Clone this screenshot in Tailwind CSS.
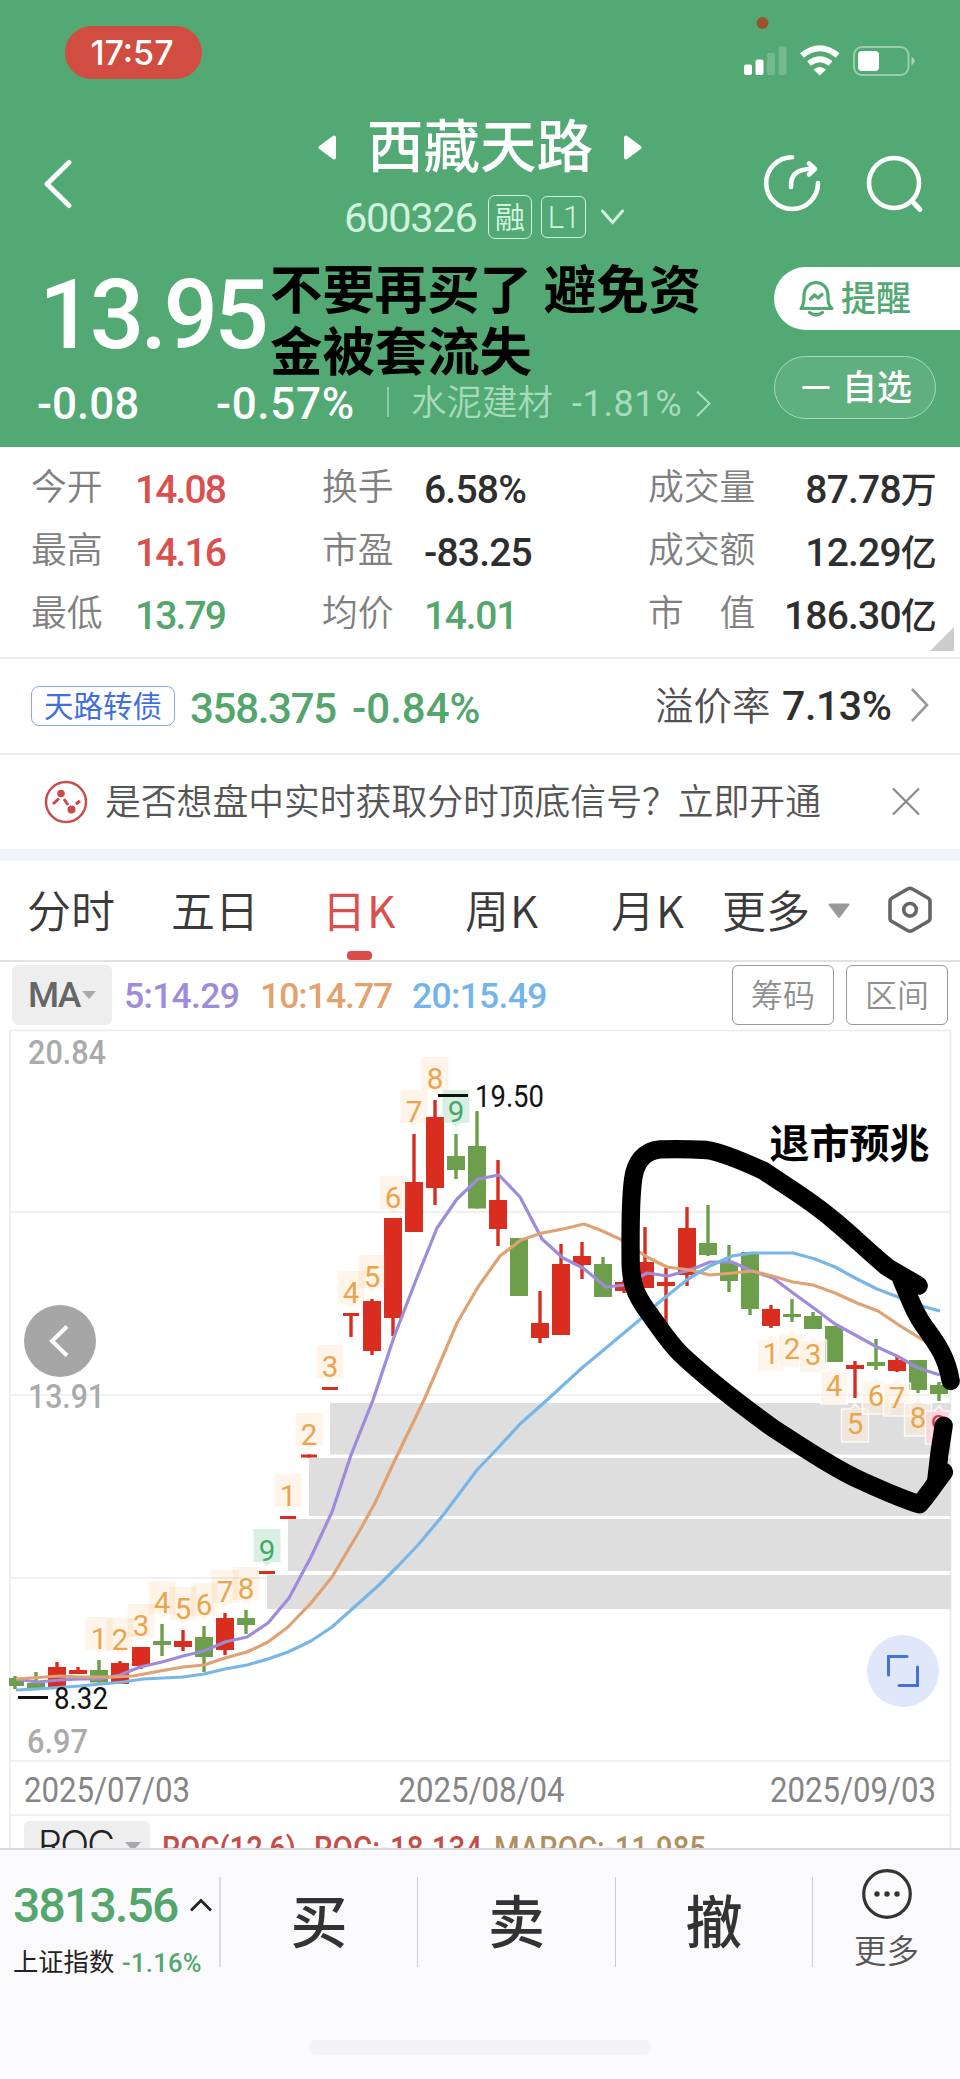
<!DOCTYPE html>
<html lang="zh-CN">
<head>
<meta charset="utf-8">
<title>西藏天路 600326</title>
<script src="https://cdn.jsdelivr.net/npm/@tailwindcss/browser@4"></script>
</head>
<body class="w-[960px] h-[2079px] overflow-hidden bg-white font-['Roboto','Noto_Sans_CJK_SC',sans-serif] leading-none whitespace-nowrap flex flex-col">

<!-- Header -->
<header class="relative h-[447px] shrink-0 bg-[#53a973] text-white">
  <div class="h-[104px] flex justify-between pl-[65px] pr-[42px] pt-[14px]">
    <div class="mt-3 w-[137px] h-[53px] rounded-full bg-[#d14d41] flex items-center justify-center text-[34px] font-medium font-['Inter'] pr-[3px]">17:57</div>
    <svg width="176" height="66" viewBox="742 14 176 66" fill="#fff">
      <circle cx="762.500" cy="23" r="6" fill="#9a532f"/>
      <rect x="744" y="64.500" width="8" height="10.500" rx="2"/>
      <rect x="755.500" y="59.500" width="8" height="15.500" rx="2"/>
      <rect x="767" y="53" width="8" height="22" rx="2" opacity=".2"/>
      <rect x="778.500" y="46.500" width="8" height="28.500" rx="2" opacity=".2"/>
      <g fill="none" stroke="#fff" stroke-width="6">
        <path d="M802 55.500Q819.800 41 837.600 55.500"/>
        <path d="M809 63.500Q819.800 55 830.600 63.500"/>
      </g>
      <path d="M813.500 69.500Q819.800 64.500 826 69.500L819.800 75.500Z"/>
      <rect x="854" y="47" width="54.500" height="28" rx="8" fill="none" stroke="#fff" stroke-opacity=".42" stroke-width="2"/>
      <rect x="858" y="51" width="21" height="20" rx="4"/>
      <path d="M911.500 56.500Q918 61 911.500 65.500Z" opacity=".5"/>
    </svg>
  </div>
  <div class="h-[146px] flex">
    <svg class="shrink-0 ml-[40px] mt-[52px]" width="36" height="56" viewBox="40 156 36 56" fill="none" stroke="#fff" stroke-width="5" stroke-linecap="round" stroke-linejoin="round"><path d="M69 162.500L47 184L69 205.500"/></svg>
    <div class="ml-[242px] w-[324px]">
      <div class="flex items-center h-[86px]">
        <svg class="mt-[1px]" width="19" height="27" viewBox="0 0 19 27" fill="#fff" stroke="#fff" stroke-width="4" stroke-linejoin="round"><path d="M16 3.500V23.500L2.500 13.500Z"/></svg>
        <h1 class="ml-[30px] text-[56.500px] font-medium pt-[3px]">西藏天路</h1>
        <svg class="ml-[30px] mt-[1px]" width="19" height="27" viewBox="0 0 19 27" fill="#fff" stroke="#fff" stroke-width="4" stroke-linejoin="round"><path d="M3 3.500V23.500L16.500 13.500Z"/></svg>
      </div>
      <div class="flex items-center h-[54px] pl-[26px] text-[#d0f3df]">
        <span class="w-[144px] text-[41.500px] tracking-[-1.200px] pt-[2px]">600326</span>
        <span class="w-[44px] h-[44px] border-[1.500px] border-current rounded-[7px] flex items-center justify-center text-[30px] font-normal pt-[1px]">融</span>
        <span class="ml-[9px] w-[45px] h-[42px] border border-current rounded-[6px] flex items-center justify-center text-[31px] font-light tracking-[-1px]">L1</span>
        <svg class="ml-[14px]" width="26" height="18" viewBox="0 0 26 18" fill="none" stroke="#d0f3df" stroke-width="3" stroke-linecap="round"><path d="M2.500 3L12.500 14.500L22.500 3"/></svg>
      </div>
    </div>
    <svg class="ml-[118px] mt-[46px]" width="170" height="70" viewBox="760 150 170 70" fill="none" stroke="#fff" stroke-width="4.600" stroke-linecap="round" stroke-linejoin="round">
      <path d="M792 157.200A25.900 25.900 0 1 0 818 183"/>
      <path d="M791 187C790.500 174 797 169 813.500 168.700M809 163.500L815 169L809 174.500"/>
      <circle cx="894" cy="183" r="25"/><path d="M912.500 201.500L920 209.500" stroke-width="5"/>
    </svg>
  </div>
  <div class="flex h-[197px]">
    <div class="w-[774px]">
      <div class="h-[128px] pl-[39px] pt-[17px] text-[96px] font-medium tracking-[-3.800px]">13.95</div>
      <div class="h-[52px] flex items-center pl-[37px]">
        <span class="w-[179px] text-[44px] font-medium">-0.08</span>
        <span class="w-[171px] text-[44px] tracking-[0.700px] font-medium">-0.57%</span>
        <span class="w-[2px] h-[30px] bg-[#8acca3] mb-[5px]"></span>
        <span class="ml-[22px] w-[161px] text-[35.500px] font-[350] text-[#a6dcbb]">水泥建材</span>
        <span class="w-[122px] text-[36px] text-[#a6dcbb] tracking-[0.600px]">-1.81%</span>
        <svg width="18" height="28" viewBox="0 0 18 28" fill="none" stroke="#a6dcbb" stroke-width="2.200"><path d="M3 1.500L15.500 13.500L3 26"/></svg>
      </div>
    </div>
    <div class="flex flex-col items-start">
      <div class="mt-[17px] w-[186px] h-[63px] rounded-l-full bg-white text-[#53a973] flex items-center pl-[24px]">
        <svg width="36" height="38" viewBox="798 279 36 38" fill="none" stroke="#53a973" stroke-width="3.200" stroke-linecap="round" stroke-linejoin="round"><path d="M801 307.500H832C828 304 828 300 828 295C828 277 804 277 804 295C804 300 804 304 801 307.500Z"/><path d="M809.500 311.500Q816 316 822.500 311.500M810.500 298L814.500 294L818 297L822 293.500"/></svg>
        <span class="ml-[7px] text-[35px] font-medium pt-[2px]">提醒</span>
      </div>
      <div class="mt-[26px] w-[162px] h-[63px] rounded-full border border-[#a3dbb8] bg-white/8 flex items-center pl-[27px]">
        <span class="w-[28px] h-[3px] bg-white rounded-full"></span>
        <span class="ml-[12px] text-[35px] font-medium pt-[2px]">自选</span>
      </div>
    </div>
  </div>
  <p class="absolute left-[270px] top-[255px] text-[52.400px] leading-[62px] font-bold text-black font-['Noto_Sans_CJK_SC',sans-serif]">不要再买了 避免资<br>金被套流失</p>
</header>

<!-- Quote figures -->
<section class="relative h-[212px] shrink-0 border-b-2 border-[#ececec] pt-[12px] text-[39px] font-medium text-[#2e2e2e] tracking-[-0.800px]">
  <div class="h-[63px] flex items-center pl-[31px]">
    <span class="w-[104px] text-[35.800px] font-[350] text-[#808080] tracking-normal pb-[3px]">今开</span><span class="w-[187px] text-[#d9504f] tracking-[-1.900px]">14.08</span>
    <span class="w-[102px] text-[35.800px] font-[350] text-[#808080] tracking-normal pb-[3px]">换手</span><span class="w-[224px]">6.58%</span>
    <span class="w-[108px] text-[35.800px] font-[350] text-[#808080] tracking-normal pb-[3px]">成交量</span><span class="w-[180px] text-right">87.78<span class="text-[36px]">万</span></span>
  </div>
  <div class="h-[63px] flex items-center pl-[31px]">
    <span class="w-[104px] text-[35.800px] font-[350] text-[#808080] tracking-normal pb-[3px]">最高</span><span class="w-[187px] text-[#d9504f] tracking-[-1.900px]">14.16</span>
    <span class="w-[102px] text-[35.800px] font-[350] text-[#808080] tracking-normal pb-[3px]">市盈</span><span class="w-[224px]">-83.25</span>
    <span class="w-[108px] text-[35.800px] font-[350] text-[#808080] tracking-normal pb-[3px]">成交额</span><span class="w-[180px] text-right">12.29<span class="text-[36px]">亿</span></span>
  </div>
  <div class="h-[63px] flex items-center pl-[31px]">
    <span class="w-[104px] text-[35.800px] font-[350] text-[#808080] tracking-normal pb-[3px]">最低</span><span class="w-[187px] text-[#53a66c] tracking-[-1.900px]">13.79</span>
    <span class="w-[102px] text-[35.800px] font-[350] text-[#808080] tracking-normal pb-[3px]">均价</span><span class="w-[224px] text-[#53a66c] tracking-[-1.300px]">14.01</span>
    <span class="w-[108px] text-[35.800px] font-[350] text-[#808080] tracking-normal pb-[3px]">市　值</span><span class="w-[180px] text-right">186.30<span class="text-[36px]">亿</span></span>
  </div>
  <svg class="absolute right-[6px] bottom-[6px]" width="24" height="24"><path d="M24 0V24H0Z" fill="#ccc"/></svg>
</section>

<!-- Convertible bond -->
<section class="h-[96px] shrink-0 border-b-2 border-[#ececec] flex items-center pl-[31px] font-medium">
  <span class="w-[144px] h-[40px] border border-[#86a9ee] rounded-[8px] flex items-center justify-center text-[29.500px] font-normal text-[#3f6fdd] pt-[4px]">天路转债</span>
  <span class="ml-[15px] w-[162px] text-[42px] text-[#53a66c] tracking-[-1.300px] pt-[5px]">358.375</span>
  <span class="w-[303px] text-[42px] text-[#53a66c] pt-[5px]">-0.84%</span>
  <span class="w-[127px] text-[38.500px] font-[350] text-[#505050] pt-[2px]">溢价率</span>
  <span class="w-[127px] text-[41px] text-[#2e2e2e] tracking-[-0.400px]">7.13%</span>
  <svg class="mb-[2px]" width="22" height="36" viewBox="0 0 22 36" fill="none" stroke="#999" stroke-width="2.600"><path d="M3 2L18 18L3 34"/></svg>
</section>

<!-- Signal prompt -->
<section class="h-[94px] shrink-0 flex items-center pl-[44px]">
  <svg width="44" height="44" viewBox="44 779 44 44" fill="none" stroke="#cb4a49" stroke-width="2.400"><circle cx="66" cy="801" r="20"/><path d="M53 803L59 797.500M64 798L68 804M76 803L80 800" stroke-width="3"/><circle cx="61" cy="792.500" r="3.800" fill="#cb4a49" stroke="none"/><circle cx="71.500" cy="808.500" r="4" fill="#cb4a49" stroke="none"/></svg>
  <span class="ml-[17px] w-[784px] text-[35.800px] font-[350] text-[#555] pt-[3px]">是否想盘中实时获取分时顶底信号？立即开通</span>
  <svg width="34" height="34" viewBox="0 0 34 34" stroke="#888" stroke-width="2.200"><path d="M4 3.500L30 29.500M30 3.500L4 29.500"/></svg>
</section>
<div class="h-[12px] shrink-0 bg-[#f2f3f8]"></div>

<!-- Period tabs -->
<nav class="relative h-[101px] shrink-0 border-b-2 border-[#e2e2e2] flex items-center pl-[27px] font-['Noto_Sans_CJK_SC',sans-serif] text-[44px] font-[350] text-[#3a3a3a] pb-[4px]">
  <span class="w-[144px]">分时</span>
  <span class="w-[151px]">五日</span>
  <span class="w-[143px] font-normal text-[#d9504f] tracking-[1px]">日K</span>
  <span class="w-[146px] tracking-[1px]">周K</span>
  <span class="w-[111px] tracking-[1px]">月K</span>
  <span class="w-[106px]">更多</span>
  <svg class="mt-[5px]" width="22" height="16" viewBox="0 0 22 16" fill="#999" stroke="#999" stroke-width="2" stroke-linejoin="round"><path d="M1.500 1.500H20.500L11 14Z"/></svg>
  <svg class="ml-[36px] mt-[3px]" width="48" height="50" viewBox="0 0 48 50" fill="none" stroke="#666" stroke-width="3.600" stroke-linejoin="round"><path d="M22 3.800Q24 2.800 26 3.800L42 13Q44 14.200 44 16.500V33Q44 35.500 42 36.500L26 45.700Q24 46.700 22 45.700L6 36.500Q4 35.500 4 33V16.500Q4 14.200 6 13Z"/><circle cx="24" cy="24.800" r="6.300"/></svg>
  <span class="absolute left-[347px] bottom-0 w-[25px] h-[9px] rounded-[4px] bg-[#dc4a4c]"></span>
</nav>

<!-- Moving averages -->
<section class="h-[68px] shrink-0 flex items-start pt-[3px] pl-[12px] text-[35.500px] font-medium tracking-[-0.700px]">
  <div class="w-[100px] h-[60px] rounded-[6px] bg-[#eee] text-[#666] flex items-center pl-[16px] pt-[2px]">
    <span class="w-[53px] tracking-[-1.500px]">MA</span>
    <svg class="mb-[3px]" width="16" height="10" fill="#aaa"><path d="M1 1H15L8 9Z"/></svg>
  </div>
  <span class="ml-[12px] w-[136px] leading-[62px] text-[#9f8bdb]">5:14.29</span>
  <span class="w-[152px] leading-[62px] text-[#e3a26d] tracking-[-1px]">10:14.77</span>
  <span class="w-[320px] leading-[62px] text-[#73b5e8]">20:15.49</span>
  <span class="w-[102px] h-[60px] border border-[#999] rounded-[6px] flex items-center justify-center text-[32px] font-[350] text-[#909090] tracking-normal pt-[1px]">筹码</span>
  <span class="ml-[12px] w-[102px] h-[60px] border border-[#999] rounded-[6px] flex items-center justify-center text-[32px] font-[350] text-[#909090] tracking-normal pt-[1px]">区间</span>
</section>

<!-- Candlestick chart -->
<svg class="shrink-0 block relative overflow-visible" width="960" height="787" viewBox="0 1030 960 787" font-family="Roboto, 'Noto Sans CJK SC', sans-serif">
  <g stroke="#ebebeb" stroke-width="1.600" fill="none">
    <path d="M10 1030.500H950.500M10 1212H950M10 1395H950M10 1578H950M10 1761H950M10 1815H950M10 1030V1848M950.500 1030V1848"/>
  </g>
  <g fill="#dedede">
    <rect x="330" y="1403" width="621" height="51.500"/><rect x="309" y="1458" width="642" height="58"/>
    <rect x="288" y="1519" width="663" height="52"/><rect x="267" y="1575" width="684" height="34"/>
  </g>
  <clipPath id="plot"><rect x="9" y="1030" width="942" height="730"/></clipPath>
  <g id="candles" clip-path="url(#plot)"></g>
  <g fill="none" stroke-width="3.200" stroke-linejoin="round">
    <polyline stroke="#9f8bdb" points="16,1679 37,1682 60,1680 80,1679 100,1679 120,1675 140,1667 162,1662 183,1656 204,1651 225,1642 247,1637 268,1623 289,1598 311,1557 332,1512 351,1455 373,1400 394,1337 416,1280 437,1228 457,1199 478,1179 499,1175 520,1197 542,1239 563,1258 583,1268 606,1287 625,1285 647,1273 668,1276 690,1270 710,1262 732,1262 752,1271 773,1278 793,1293 815,1309 835,1324 857,1336 877,1347 897,1356 918,1368 940,1375"/>
    <polyline stroke="#e0a173" points="16,1679 60,1676 80,1677 113,1677 133,1676 160,1671 183,1667 204,1665 225,1658 247,1652 268,1642 288,1627 311,1603 332,1577 360,1530 375,1503 394,1462 424,1400 437,1370 457,1323 478,1287 500,1256 521,1240 542,1233 563,1229 584,1224 600,1230 620,1239 647,1257 667,1267 690,1270 710,1275 733,1273 752,1271 772,1276 793,1282 813,1285 835,1293 857,1303 878,1311 902,1327 923,1340 940,1350"/>
    <polyline stroke="#78b6e8" points="16,1690 37,1689 80,1686 123,1682 143,1679 183,1677 204,1674 225,1669 247,1665 268,1659 288,1652 311,1641 332,1627 360,1602 379,1585 398,1566 418,1545 444,1514 477,1470 497,1449 520,1424 547,1400 583,1367 600,1353 643,1317 657,1304 688,1279 710,1266 732,1256 752,1253 793,1253 815,1259 835,1267 857,1279 877,1289 898,1297 925,1307 940,1311"/>
  </g>
  <g id="marks" font-size="29.500" text-anchor="middle"></g>
  <g stroke="#111" stroke-width="3"><path d="M438 1095.500H468M18 1697.500H48"/></g>
  <g font-size="30.500" fill="#111">
    <text x="475" y="1107" textLength="69" lengthAdjust="spacingAndGlyphs">19.50</text>
    <text x="54" y="1709" textLength="54" lengthAdjust="spacingAndGlyphs">8.32</text>
  </g>
  <g font-size="33.500" fill="#aaa" font-weight="500">
    <text x="28" y="1063.500" textLength="78" lengthAdjust="spacingAndGlyphs">20.84</text>
    <text x="28" y="1408" textLength="77" lengthAdjust="spacingAndGlyphs">13.91</text>
    <text x="27" y="1753" textLength="61" lengthAdjust="spacingAndGlyphs">6.97</text>
  </g>
  <g font-size="34.500" fill="#858585">
    <text x="24" y="1801.500" textLength="166" lengthAdjust="spacingAndGlyphs">2025/07/03</text>
    <text x="398.500" y="1801.500" textLength="166" lengthAdjust="spacingAndGlyphs">2025/08/04</text>
    <text x="770" y="1801.500" textLength="166" lengthAdjust="spacingAndGlyphs">2025/09/03</text>
  </g>
  <circle cx="60" cy="1341" r="36" fill="#a6a6a6"/><path d="M67 1326.500L52 1341L67 1355.500" fill="none" stroke="#fff" stroke-width="4"/>
  <circle cx="903" cy="1671" r="36" fill="#e0e7fb"/>
  <path d="M907 1656.500H888.500V1675M917.500 1667V1685.500H899" fill="none" stroke="#4672d8" stroke-width="3" stroke-linecap="round"/>
  <text x="769.500" y="1158" font-size="40" font-weight="700" fill="#000">退市预兆</text>
  <g transform="translate(600 1100) scale(.33333)" fill="none" stroke="#000" stroke-width="55" stroke-linecap="round" stroke-linejoin="round">
    <path d="M1052 843C1040 770 1010 730 975 682C945 640 935 610 905 540"/>
    <path d="M956 557C930 540 890 520 860 500C800 450 750 400 700 360C630 300 560 260 490 212C420 180 360 155 320 150C270 147 220 147 180 148C130 152 105 190 99 240C90 310 91 400 92 490C94 550 105 580 140 630C170 670 200 720 240 760C330 845 430 920 520 985C620 1050 720 1115 790 1145C850 1172 900 1195 958 1213C985 1185 1005 1150 1032 1116"/>
    <path d="M1031 977C1022 1030 1015 1080 1009 1140L1025 1115"/>
  </g>
</svg>

<!-- ROC indicator row, partly under the bottom bar -->
<div class="relative h-[31px] shrink-0 flex items-start overflow-hidden ml-[24px] mr-[11px] pt-[4px]">
  <div class="w-[126px] h-[52px] rounded-[6px] bg-[#eee] shrink-0 flex pl-[14px] pt-[4px]">
    <span class="w-[87px] font-['Inter'] font-light text-[38px] text-[#222] tracking-[-1.800px]">ROC</span>
    <svg class="mt-[16px]" width="16" height="10" fill="#aaa"><path d="M0 1H16L8 10Z"/></svg>
  </div>
  <svg class="shrink-0" width="600" height="52" viewBox="150 1821 600 52" font-family="Roboto, sans-serif" font-size="34" font-weight="500">
    <text x="162" y="1860" textLength="134" lengthAdjust="spacingAndGlyphs" fill="#c44c49">ROC(12,6)</text>
    <text x="314" y="1860" textLength="168" lengthAdjust="spacingAndGlyphs" fill="#c44c49">ROC:-18.134</text>
    <text x="494" y="1860" textLength="212" lengthAdjust="spacingAndGlyphs" fill="#b0905f">MAROC:-11.985</text>
  </svg>
</div>

<!-- Bottom bar -->
<footer class="relative h-[231px] shrink-0 bg-[#fafafc] border-t-2 border-[#d9d9dd] flex flex-col">
  <div class="h-[130px] flex items-start pt-[27px] text-[#333]">
    <div class="w-[219px] pl-[13px]">
      <div class="flex items-center h-[60px] mt-[-1px]">
        <span class="w-[177px] text-[48px] font-medium text-[#53a66c] tracking-[-1.800px]">3813.56</span>
        <svg class="mb-[3px]" width="22" height="14" viewBox="0 0 22 14" fill="none" stroke="#222" stroke-width="2.800"><path d="M1 12.500L11 2.500L21 12.500"/></svg>
      </div>
      <div class="flex items-center h-[40px] mt-[7px]">
        <span class="w-[109px] text-[25.300px] text-[#222] pb-[1px]">上证指数</span>
        <span class="text-[25.500px] font-medium text-[#53a66c] tracking-[0.300px] pt-[1px]">-1.16%</span>
      </div>
    </div>
    <div class="w-[198px] h-[90px] border-l-2 border-[#dcdcdf] flex items-center justify-center text-[57px] font-medium pt-[3px]">买</div>
    <div class="w-[198px] h-[90px] border-l border-[#ccc] flex items-center justify-center text-[57px] font-medium pt-[3px]">卖</div>
    <div class="w-[197px] h-[90px] border-l border-[#ccc] flex items-center justify-center text-[57px] font-medium pt-[3px]">撤</div>
    <div class="w-[148px] h-[90px] border-l border-[#ccc] flex flex-col items-center">
      <svg class="mt-[-9px] shrink-0" width="52" height="52" viewBox="0 0 52 52"><circle cx="26" cy="26" r="23.300" fill="none" stroke="#333" stroke-width="3.200"/><circle cx="16" cy="26" r="2.700" fill="#333"/><circle cx="26" cy="26" r="2.700" fill="#333"/><circle cx="36" cy="26" r="2.700" fill="#333"/></svg>
      <span class="mt-[16px] text-[32.500px] font-[350] text-[#555]">更多</span>
    </div>
  </div>
  <span class="mt-[60px] ml-[309px] w-[342px] h-[15px] rounded-full bg-[#f4f4f6]"></span>
</footer>

<script>
  const R = '#d92d20', G = '#6d9e4b', X = i => 15 + 21 * i;
  // [up?, high, bodyTop, bodyBottom, low], one per trading day
  const days = [
    [0,1676,1678,1686,1689],[0,1672,1683,1688,1688],[1,1662,1667,1687,1687],[1,1667,1670,1674,1674],[0,1660,1670,1682.5,1682.5],
    [1,1661,1663,1684,1684],[1,1647,1647,1666,1669],[0,1624,1641,1645,1656],[1,1630,1641,1647,1651],[0,1626,1637,1657,1672],
    [1,1613,1618,1650,1655],[0,1610,1618,1625,1634],[1,1571,1571,1574,1574],[1,1516,1516,1519,1519],[1,1454.5,1454.5,1457.5,1457.5],
    [1,1387,1387,1390,1390],[1,1313,1313,1316,1337],[1,1299,1301,1351,1355],[1,1218,1218,1318,1336],[1,1134,1182,1232,1232],
    [1,1100,1117,1188,1205],[0,1134,1156,1170,1179],[0,1111,1146,1208.5,1208.5],[1,1160,1200,1229,1246],[0,1238,1238,1296,1296],
    [1,1291,1323,1338,1343],[1,1244,1264,1335,1335],[1,1242,1256,1265,1279],[0,1257,1264,1297,1297],[1,1280,1282,1291,1293],
    [1,1227,1262,1288,1288],[1,1268,1282,1286,1348],[1,1207,1228,1275,1286],[0,1205,1243,1255,1256],[0,1245,1263,1281,1292],
    [0,1252,1252,1309,1315],[1,1305,1309,1326,1328],[0,1299,1314,1317,1322],[0,1312,1316,1329,1329],[0,1326,1326,1362,1362],
    [1,1361,1365,1369,1398],[0,1339,1362,1366,1370],[1,1356,1360,1371,1372],[0,1360,1360,1390,1393],[0,1382,1385,1394,1401]
  ];
  document.getElementById('candles').innerHTML = days.map(([up, h, t, b, l], i) => {
    const c = up ? R : G, w = i >= 12 && i <= 16 ? 16 : 18;
    return `<rect x="${X(i) - w / 2}" y="${t}" width="${w}" height="${b - t}" fill="${c}"/><rect x="${X(i) - 1.7}" y="${h}" width="3.4" height="${l - h}" fill="${c}"/>`;
  }).join('');
  // Sequence counters above the candles: [day, digit, badge top]
  const above = [[4,1,1617],[5,2,1618],[6,3,1604],[7,4,1581],[8,5,1587],[9,6,1583],[10,7,1570],[11,8,1567],[12,9,1529],[13,1,1474],[14,2,1413],[15,3,1345],[16,4,1271],[17,5,1255],[18,6,1176],[19,7,1090],[20,8,1057],[21,9,1090]];
  // Counters below the candles: [day, digit, baseline]
  const below = [[36,1,1364],[37,2,1359],[38,3,1365],[39,4,1396],[40,5,1434],[41,6,1406],[42,7,1408],[43,8,1428],[44,9,1436]];
  document.getElementById('marks').innerHTML =
    above.map(([i, n, y]) => {
      const x = X(i), g = n === 9;
      return `<path d="M${x - 13.5} ${y}h27v33h-9l-4.500 4l-4.500 -4h-9z" fill="${g ? '#50b480' : '#f5a64d'}" fill-opacity="${g ? .22 : .12}"/><text x="${x}" y="${y + 31.5}" fill="${g ? '#45a86c' : '#e9a54c'}">${n}</text>`;
    }).join('') +
    below.map(([i, n, y]) => {
      const x = X(i), p = n === 9, e = p ? 11 : 13.5;
      return `<path d="M${x - 13.5} ${y - 25}h9l4.500 -5l4.500 5h${e - 4.5}v33h-${e + 13.5}z" fill="${p ? '#fbd5da' : '#fdeedd'}" fill-opacity="${p ? .8 : .55}" stroke="#fff" stroke-opacity=".8" stroke-width="1.500" stroke-linejoin="round"/><text x="${x}" y="${y}" fill="${p ? '#d93a50' : '#e9a54c'}">${n}</text>`;
    }).join('');
</script>
</body>
</html>
